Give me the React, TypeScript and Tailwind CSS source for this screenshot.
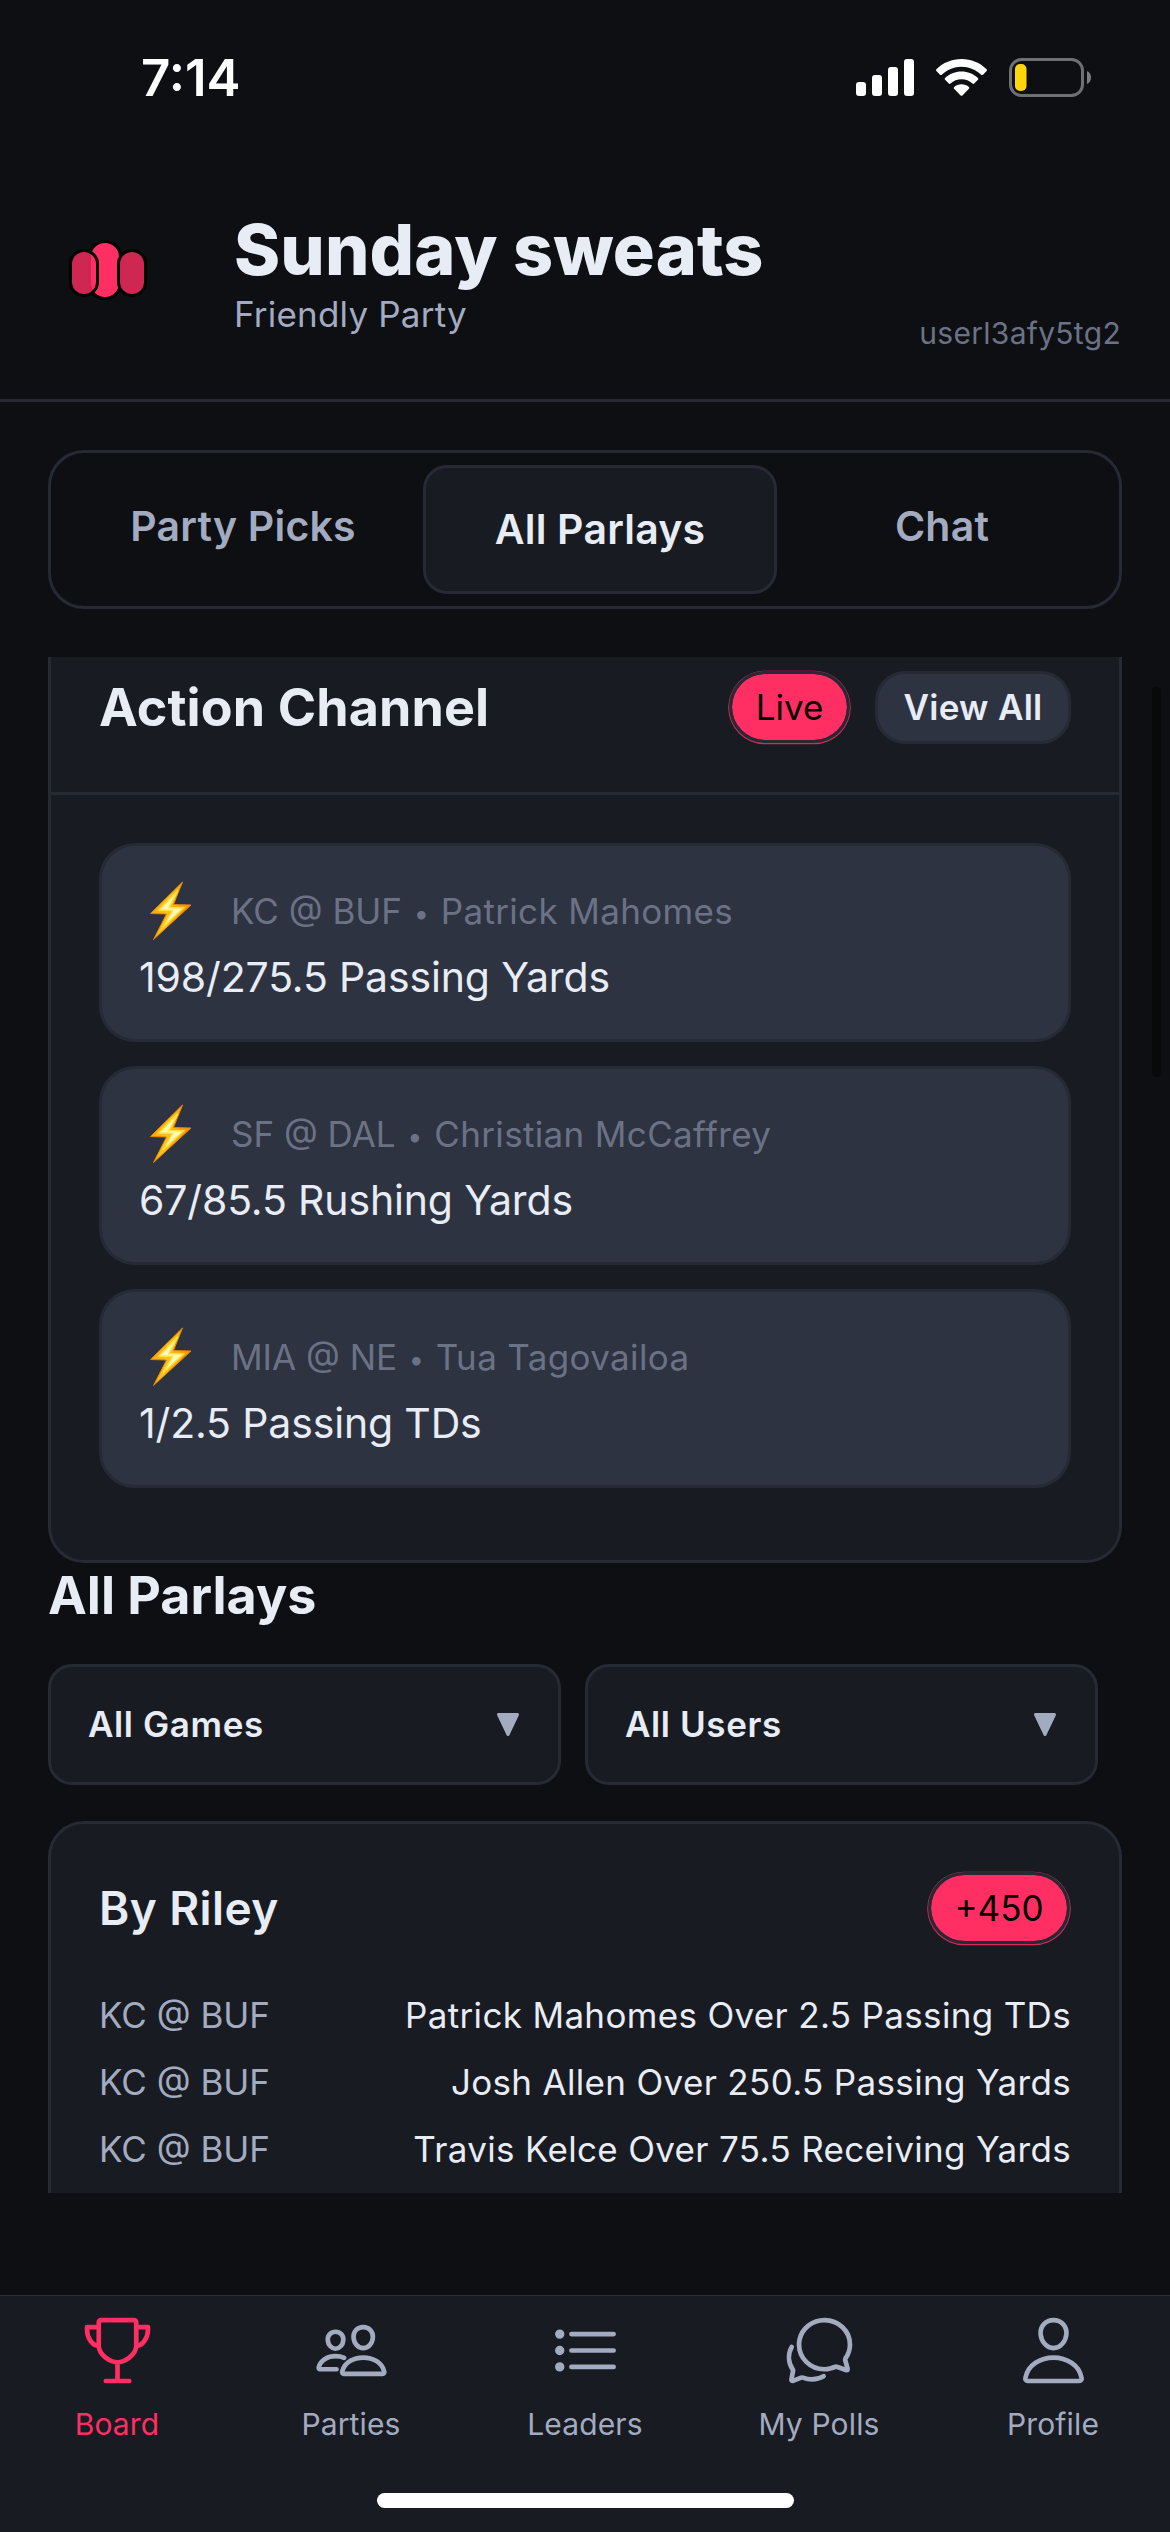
import React from 'react';
import {
    IoChatbubblesOutline,
    IoListOutline,
    IoPeopleOutline,
    IoPersonOutline,
    IoTrophyOutline,
} from 'react-icons/io5';

const plays = [
    { matchup: 'KC @ BUF', player: 'Patrick Mahomes', progress: '198/275.5 Passing Yards' },
    { matchup: 'SF @ DAL', player: 'Christian McCaffrey', progress: '67/85.5 Rushing Yards' },
    { matchup: 'MIA @ NE', player: 'Tua Tagovailoa', progress: '1/2.5 Passing TDs' },
];

const legs = [
    { matchup: 'KC @ BUF', pick: 'Patrick Mahomes Over 2.5 Passing TDs' },
    { matchup: 'KC @ BUF', pick: 'Josh Allen Over 250.5 Passing Yards' },
    { matchup: 'KC @ BUF', pick: 'Travis Kelce Over 75.5 Receiving Yards' },
];

const navItems = [
    { label: 'Board', Icon: IoTrophyOutline, active: true },
    { label: 'Parties', Icon: IoPeopleOutline, active: false },
    { label: 'Leaders', Icon: IoListOutline, active: false },
    { label: 'My Polls', Icon: IoChatbubblesOutline, active: false },
    { label: 'Profile', Icon: IoPersonOutline, active: false },
];

function StatusBar() {
    return (
        <div className="flex h-[141px] items-start justify-between pl-[141px] pr-[78px] pt-[48px]">
            <span className="text-[51px] leading-[60px] font-semibold text-white">7:14</span>
            <div className="flex items-center gap-[22px] pt-[10px]">
                <svg width="58" height="37" viewBox="0 0 58 37" fill="#fff">
                    <rect x="0" y="23" width="10" height="14" rx="3" />
                    <rect x="16" y="16" width="10" height="21" rx="3" />
                    <rect x="32" y="8" width="10" height="29" rx="3" />
                    <rect x="48" y="0" width="10" height="37" rx="3" />
                </svg>
                <svg width="51" height="37" viewBox="0 0 51 37" fill="#fff">
                    <path d="M25.5 0C35 0 44 3.700 50.600 10.200c.5.5.5 1.300 0 1.800l-3.600 3.700c-.5.500-1.300.500-1.800 0C40 10.700 33 7.700 25.500 7.700S11 10.700 5.800 15.700c-.5.500-1.300.500-1.800 0L.4 12c-.5-.5-.5-1.300 0-1.800C7 3.700 16 0 25.500 0z" />
                    <path d="M25.500 12.600c6.200 0 12 2.300 16.400 6.400.5.5.5 1.300 0 1.800l-3.700 3.700c-.5.5-1.200.5-1.700 0a16.200 16.200 0 0 0-22 0c-.5.500-1.200.500-1.700 0l-3.700-3.700c-.5-.5-.5-1.300 0-1.800 4.400-4.100 10.200-6.400 16.400-6.400z" />
                    <path d="M25.500 25.300c2.800 0 5.400 1 7.400 2.700.5.5.5 1.300 0 1.800l-6.500 6.600c-.5.5-1.300.5-1.800 0l-6.500-6.600c-.5-.5-.5-1.300 0-1.800 2-1.700 4.600-2.700 7.400-2.700z" />
                </svg>
                <svg width="83" height="39" viewBox="0 0 83 39">
                    <rect x="1.500" y="1.500" width="72" height="36" rx="11" fill="none" stroke="#6f7072" strokeWidth="3" />
                    <path d="M78 13c2.500 1 4 3.500 4 6.500s-1.500 5.500-4 6.500z" fill="#7c7d7f" />
                    <rect x="6" y="6" width="11.500" height="27" rx="5" fill="#ffd60a" />
                </svg>
            </div>
        </div>
    );
}

function PartyLogo() {
    return (
        <svg width="84" height="66" viewBox="66 237 84 66" className="shrink-0">
            <rect x="89.500" y="241.500" width="31" height="57" rx="15.500" fill="#ff2e63" stroke="#000" strokeWidth="3" />
            <rect x="70.500" y="250.500" width="27" height="45" rx="13.500" fill="#ff2e63" fillOpacity="0.8" stroke="#000" strokeWidth="3" />
            <rect x="118.500" y="250.500" width="27" height="45" rx="13.500" fill="#ff2e63" fillOpacity="0.8" stroke="#000" strokeWidth="3" />
        </svg>
    );
}

function Bolt() {
    return (
        <svg width="42" height="66" viewBox="0 0 42 66" className="shrink-0">
            <defs>
                <linearGradient id="bolt" x1="0" y1="0" x2="1" y2="0.3">
                    <stop offset="0" stopColor="#ff9500" />
                    <stop offset="0.5" stopColor="#ffc21f" />
                    <stop offset="1" stopColor="#ff9000" />
                </linearGradient>
            </defs>
            <path d="M32.500 4 L0.500 35.500 L16.500 36 L3.500 61.500 L41 27 L23.500 26.500 Z" fill="url(#bolt)" stroke="#e08600" strokeWidth="1" strokeLinejoin="round" />
            <path d="M28 12.500 L9 32 L22.500 32.500 L13 49 L33.500 30 L19 29.500 Z" fill="#fff9b8" stroke="#ffe23d" strokeWidth="1.500" />
        </svg>
    );
}

function Badge({ children, className }: { children: React.ReactNode; className: string }) {
    return (
        <div
            className={`mx-px flex h-[72px] items-center justify-center rounded-full border-[3px] border-[#262a34] bg-[#ff2e63] bg-clip-padding pt-px text-[35px] text-black shadow-[0_0.5px_0_0.8px_#ff2e63d0] ${className}`}
        >
            {children}
        </div>
    );
}

function FilterSelect({ label }: { label: string }) {
    return (
        <div className="flex h-[121px] w-[513px] items-center justify-between rounded-[24px] border-[3px] border-[#262a34] bg-[#181b22] pl-[37px] pr-[39px]">
            <span className="text-[35px] font-[560] tracking-[0.6px] text-[#e8ecf5]">{label}</span>
            <svg width="22" height="23" viewBox="0 0 22 23">
                <path d="M1.500 1.500h19L11 21.500z" fill="#a3abc0" stroke="#a3abc0" strokeWidth="3" strokeLinejoin="round" />
            </svg>
        </div>
    );
}

export default function App() {
    return (
        <div className="relative flex h-[2532px] w-[1170px] flex-col overflow-hidden bg-[#0d0f13] font-['Inter',sans-serif]">
            <StatusBar />

            {/* Header */}
            <header className="flex h-[261px] items-start border-b-[3px] border-[#262a34] pl-[66px] pr-[49px]">
                <div className="pt-[96px]">
                    <PartyLogo />
                </div>
                <div className="ml-[84px] flex-1 pt-[67px]">
                    <h1 className="text-[70px] leading-[84px] font-extrabold tracking-[0.1px] text-[#e8ecf5]">Sunday sweats</h1>
                    <p className="text-[35px] leading-[45px] tracking-[0.2px] text-[#a3abc0]">Friendly Party</p>
                </div>
                <span className="mt-[172px] text-[30px] leading-[40px] tracking-[0.3px] text-[#6b7285]">userl3afy5tg2</span>
            </header>

            {/* Tabs */}
            <div className="mx-[48px] mt-[48px] flex h-[159px] rounded-[36px] border-[3px] border-[#262a34] p-[12px] text-[41px] leading-[48px] font-[560] tracking-[0.2px] text-[#a3abc0]">
                <div className="w-[360px] pt-[37px] text-center">Party Picks</div>
                <div className="w-[354px] rounded-[24px] border-[3px] border-[#262a34] bg-[#181b22] pt-[37px] text-center text-[#e8ecf5]">
                    All Parlays
                </div>
                <div className="w-[330px] pt-[37px] text-center">Chat</div>
            </div>

            {/* Scrolling content */}
            <main className="mt-[48px] h-[1536px] overflow-hidden px-[48px]">
                <section className="h-[906px] rounded-b-[36px] border-x-[3px] border-b-[3px] border-[#262a34] bg-[#181b22]">
                    <div className="flex h-[138px] items-start justify-between border-b-[3px] border-[#262a34] px-[48px] pt-[14px]">
                        <h2 className="text-[52px] leading-[74px] font-bold tracking-[0.1px] text-[#e8ecf5]">Action Channel</h2>
                        <div className="flex gap-[24px]">
                            <Badge className="w-[121px]">Live</Badge>
                            <div className="flex h-[73px] w-[196px] items-center justify-center rounded-[30px] border-[3px] border-[#262a34] bg-[#2e3341] text-[35px] font-[560] tracking-[0.3px] text-[#e8ecf5]">
                                View All
                            </div>
                        </div>
                    </div>
                    <div className="flex flex-col gap-[24px] px-[48px] pt-[48px]">
                        {plays.map((play) => (
                            <div key={play.player} className="h-[199px] rounded-[36px] border-[3px] border-[#262a34] bg-[#2e3341] pl-[37px] pt-[36px]">
                                <div className="flex h-[58px] items-center">
                                    <div className="pl-[11px]">
                                        <Bolt />
                                    </div>
                                    <span className="ml-[39px] text-[35px] leading-[58px] text-[#6b7285]">
                                        {play.matchup}{' '}
                                        <span className="inline-flex w-[19px] justify-center align-[1px] text-[27px] leading-none">•</span>{' '}
                                        <span className="tracking-[0.35px]">{play.player}</span>
                                    </span>
                                </div>
                                <div className="mt-[10px] text-[41px] leading-[54px] tracking-[-0.15px] text-[#e8ecf5]">{play.progress}</div>
                            </div>
                        ))}
                    </div>
                </section>

                <h2 className="h-[101px] text-[52px] leading-[66px] font-bold text-[#e8ecf5]">All Parlays</h2>

                <div className="flex gap-[24px]">
                    <FilterSelect label="All Games" />
                    <FilterSelect label="All Users" />
                </div>

                <section className="mt-[36px] h-[500px] rounded-[36px] border-[3px] border-[#262a34] bg-[#181b22] px-[48px] pt-[48px]">
                    <div className="flex items-center justify-between">
                        <h3 className="text-[46px] leading-[72px] font-semibold tracking-[0.4px] text-[#e8ecf5]">By Riley</h3>
                        <Badge className="w-[142px]">+450</Badge>
                    </div>
                    <div className="mt-[38px]">
                        {legs.map((leg) => (
                            <div key={leg.pick} className="flex justify-between text-[35px] leading-[67px]">
                                <span className="text-[#a3abc0]">{leg.matchup}</span>
                                <span className="tracking-[0.33px] text-[#e8ecf5]">{leg.pick}</span>
                            </div>
                        ))}
                    </div>
                </section>
            </main>

            {/* Scroll indicator */}
            <div className="absolute top-[687px] right-[9px] h-[390px] w-[9px] rounded-full bg-[#08090b]" />

            {/* Bottom navigation */}
            <nav className="mt-[102px] flex h-[237px] flex-col items-center justify-between border-t border-[#2b2e35] bg-[#181b22] pb-[24px]">
                <div className="grid w-full grid-cols-5 pt-[17px]">
                    {navItems.map(({ label, Icon, active }) => (
                        <div
                            key={label}
                            className={active ? 'flex flex-col items-center text-[#ff2e63]' : 'flex flex-col items-center text-[#a3abc0]'}
                        >
                            <Icon size={75} />
                            <span className="mt-[16px] text-[30px] leading-[40px] tracking-[0.15px]">{label}</span>
                        </div>
                    ))}
                </div>
                <div className="h-[15px] w-[417px] rounded-full bg-white" />
            </nav>
        </div>
    );
}
